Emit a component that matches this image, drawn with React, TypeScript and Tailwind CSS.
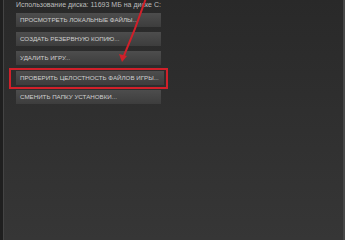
const actions = [
  'ПРОСМОТРЕТЬ ЛОКАЛЬНЫЕ ФАЙЛЫ...',
  'СОЗДАТЬ РЕЗЕРВНУЮ КОПИЮ...',
  'УДАЛИТЬ ИГРУ...',
];

const GameButton: React.FC<{ label: string; wide?: boolean }> = ({ label, wide }) => (
  <div
    className={`flex items-center h-[14px] ${wide ? 'w-[148px]' : 'w-[145px]'} pl-[4px] bg-gradient-to-b from-[#4d4d4d] to-[#3d3d3d] text-[#cfcfcf] text-[6.2px] leading-none whitespace-nowrap overflow-hidden`}
  >
    {label}
  </div>
);

export default function App() {
  return (
    <div
      className="relative w-[345px] h-[240px] overflow-hidden bg-gradient-to-b from-[#292929] to-[#363636]"
      style={{ fontFamily: '"Liberation Sans", Arial, sans-serif' }}
    >
      {/* window edges */}
      <div className="absolute left-0 top-0 h-full w-[3px] bg-[#1f1f1f]" />
      <div className="absolute left-[3px] top-0 h-full w-px bg-[#444]" />
      <div className="absolute right-0 top-0 h-full w-[2px] bg-[#474747]" />

      <div className="flex flex-col pl-[16px]">
        <div className="pt-[1px] h-[8px] text-[7px] leading-none text-[#bdbdbd] whitespace-nowrap">
          Использование диска: 11693 МБ на диске C:
        </div>
        <div className="mt-[5px] flex flex-col gap-[5px]">
          {actions.map((a) => (
            <GameButton key={a} label={a} />
          ))}
        </div>
        <div className="mt-[3px] -ml-[7px] w-[159px] h-[21px] border-2 border-[#d0202a] pl-[5px] pr-[1px] pt-[1px]">
          <GameButton label="ПРОВЕРИТЬ ЦЕЛОСТНОСТЬ ФАЙЛОВ ИГРЫ..." wide />
        </div>
        <div className="mt-[1px]">
          <GameButton label="СМЕНИТЬ ПАПКУ УСТАНОВКИ..." />
        </div>
      </div>

      {/* annotation arrow */}
      <svg className="absolute left-0 top-0" width="345" height="240" viewBox="0 0 345 240">
        <path d="M146 -2 Q 136 28 123 58" stroke="#d0202a" strokeWidth="2" fill="none" strokeLinecap="round" />
        <path d="M119 54 L122 62 L127 56 Z" fill="#d0202a" />
      </svg>
    </div>
  );
}
